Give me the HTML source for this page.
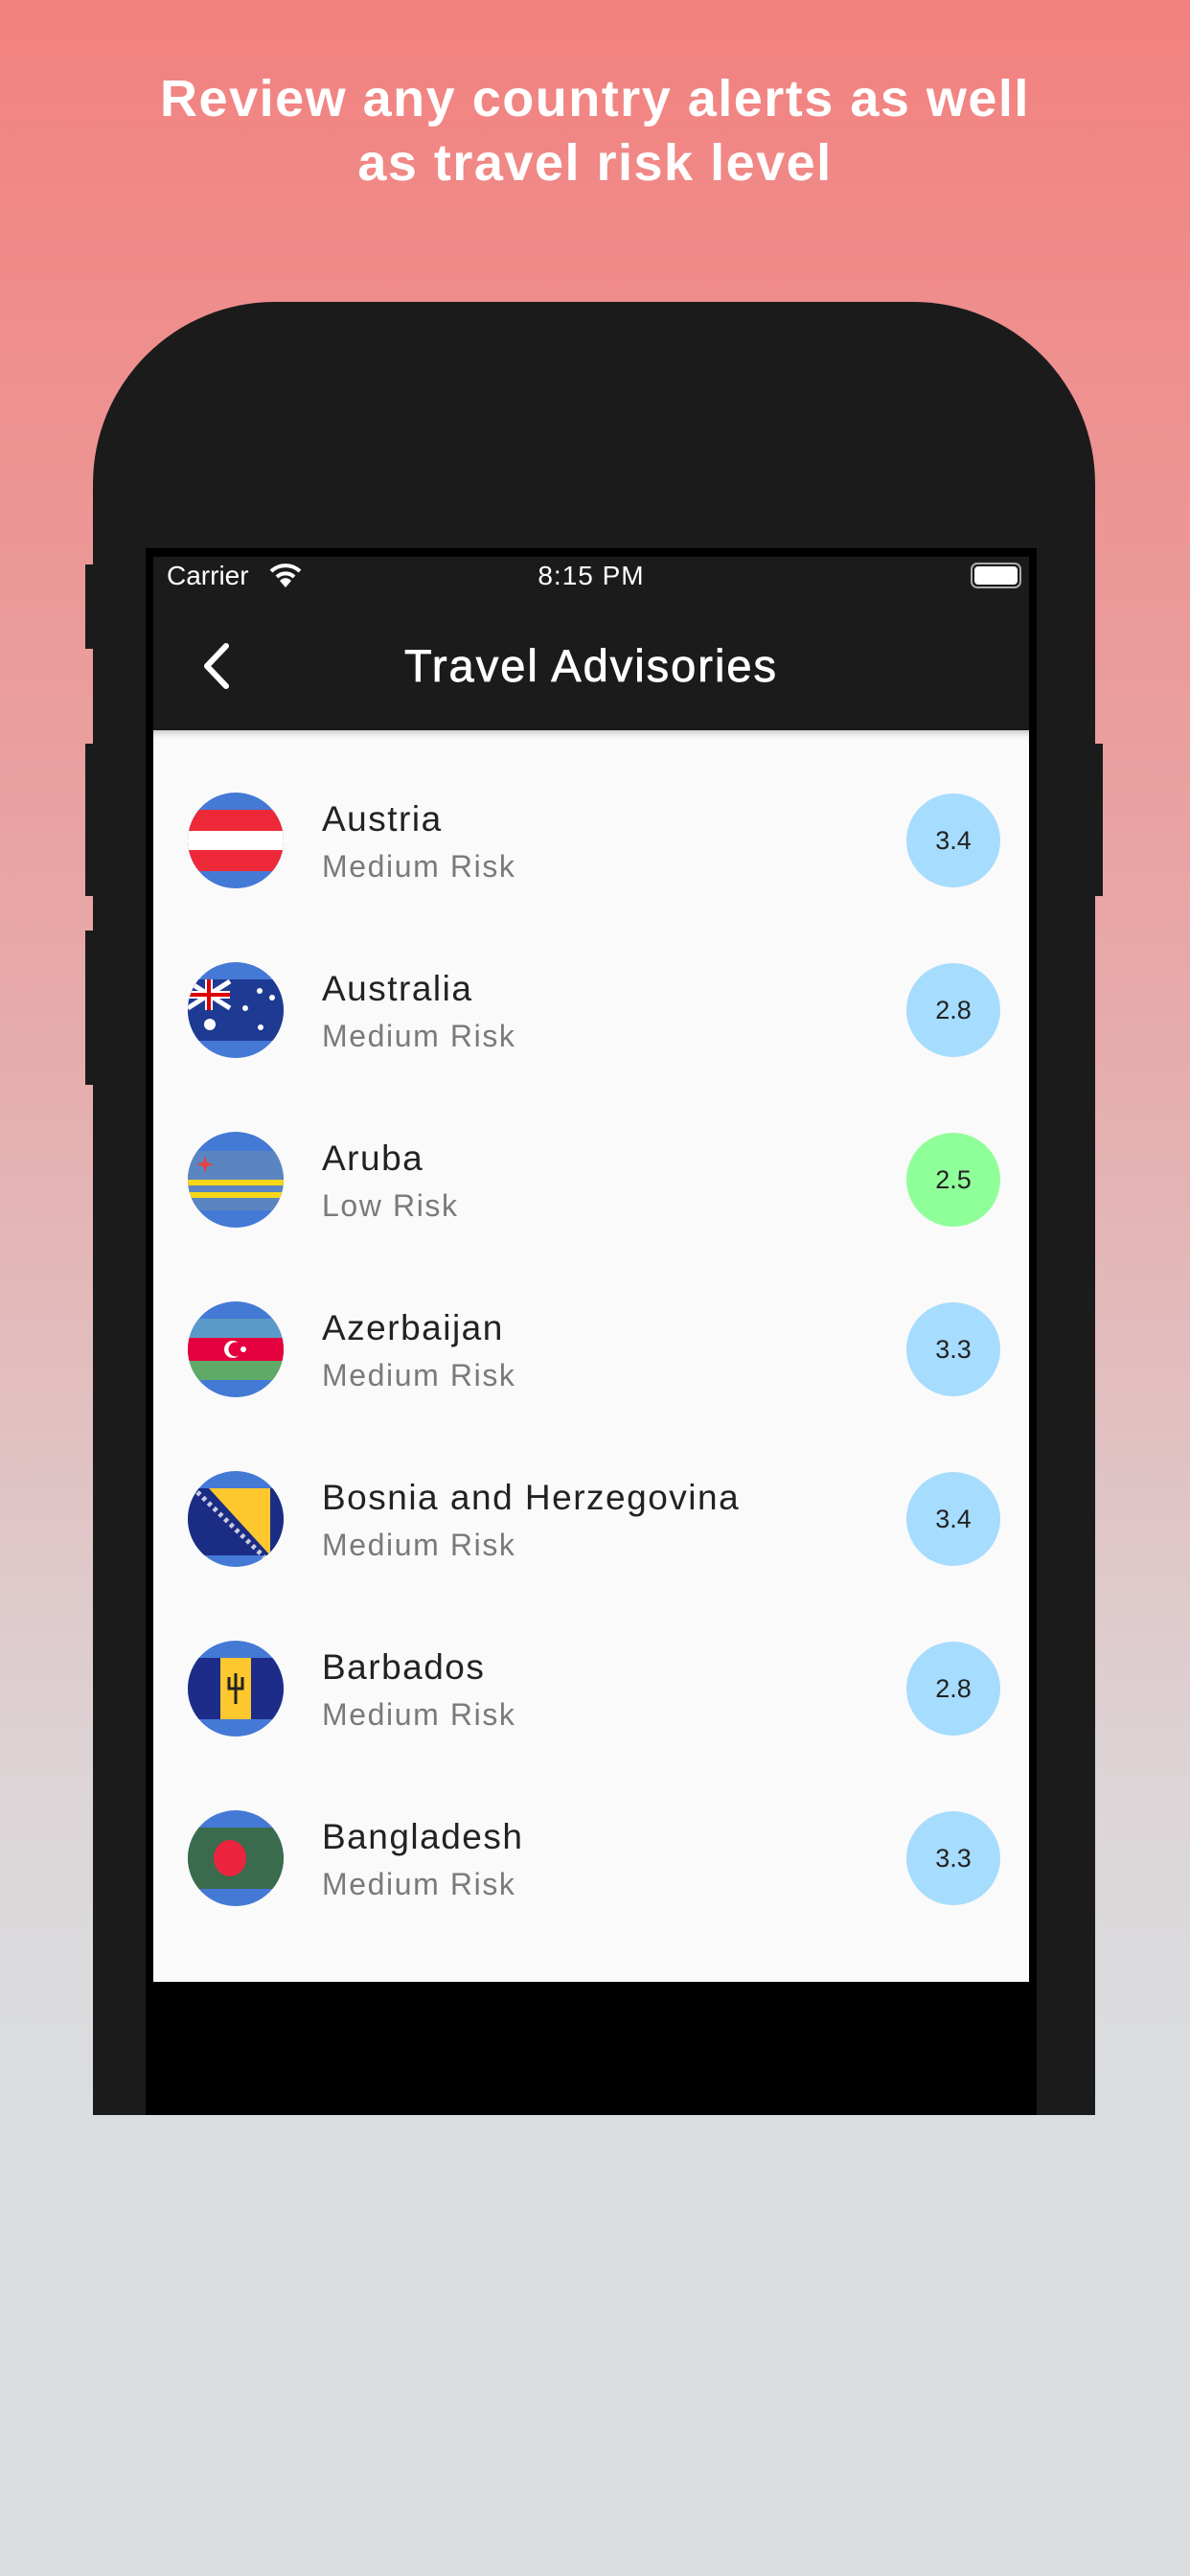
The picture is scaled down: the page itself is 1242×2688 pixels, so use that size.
<!DOCTYPE html>
<html><head><meta charset="utf-8"><style>
*{margin:0;padding:0;box-sizing:border-box}
html,body{width:1242px;height:2688px;overflow:hidden}
body{position:relative;font-family:"Liberation Sans",sans-serif;background:linear-gradient(#f2817f 0px,#e6acac 1100px,#dcd6d8 1900px,#dadee1 2210px,#dadee1 2688px)}
.head{position:absolute;top:70px;left:0;width:1242px;text-align:center;color:#fff;font-weight:bold;font-size:54px;line-height:67px;letter-spacing:1.5px}
.btn{position:absolute;background:#1b1b1b}
.phone{position:absolute;left:97px;top:315px;width:1046px;height:1892px;background:#1b1b1b;border-radius:190px 190px 0 0}
.screen{position:absolute;left:152px;top:572px;width:930px;height:1635px;background:#000}
.bar{position:absolute;left:160px;top:581px;width:914px;height:181px;background:#1b1b1b;color:#fff}
.list{position:absolute;left:160px;top:762px;width:914px;height:1306px;background:#fafafa;overflow:hidden;box-shadow:inset 0 8px 8px -6px rgba(0,0,0,.25)}
.row{position:absolute;left:0;width:914px;height:100px}
.flag{position:absolute;left:36px;top:0;width:100px;height:100px}
.name{position:absolute;left:176px;top:7px;font-size:37px;color:#222;letter-spacing:1.5px}
.risk{position:absolute;left:176px;top:59px;font-size:32px;color:#7a7a7a;letter-spacing:1.6px}
.badge{position:absolute;left:786px;top:1px;width:98px;height:98px;border-radius:50%;background:#a6dcfd;text-align:center;line-height:98px;font-size:27px;color:#222}
</style></head><body>
<div class="head">Review any country alerts as well<br>as travel risk level</div>
<div class="btn" style="left:89px;top:589px;width:10px;height:88px"></div>
<div class="btn" style="left:89px;top:776px;width:10px;height:159px"></div>
<div class="btn" style="left:89px;top:971px;width:10px;height:161px"></div>
<div class="btn" style="left:1141px;top:776px;width:10px;height:159px"></div>
<div class="phone"></div>
<div class="screen"></div>
<div class="bar">
 <div style="position:absolute;left:14px;top:4px;font-size:28px">Carrier</div>
 <svg style="position:absolute;left:120px;top:4px" width="36" height="30" viewBox="0 0 36 30"><path d="M3 11 A22 22 0 0 1 33 11" stroke="#fff" stroke-width="4" fill="none"/><path d="M9 17 A13 13 0 0 1 27 17" stroke="#fff" stroke-width="4" fill="none"/><path d="M18 28 L12 21 A8 8 0 0 1 24 21 Z" fill="#fff"/></svg>
 <div style="position:absolute;left:0;width:914px;top:4px;text-align:center;font-size:28px;letter-spacing:1px">8:15 PM</div>
 <div style="position:absolute;left:853px;top:6px;width:53px;height:27px;border:2px solid #aaa;border-radius:7px;padding:2px"><div style="width:100%;height:100%;background:#fff;border-radius:4px"></div></div>
 <svg style="position:absolute;left:48px;top:89px" width="36" height="50" viewBox="0 0 36 50"><path d="M28 4 L8 25 L28 46" stroke="#fff" stroke-width="6" fill="none" stroke-linecap="round" stroke-linejoin="round"/></svg>
 <div style="position:absolute;left:0;width:914px;top:86px;text-align:center;font-size:47px;letter-spacing:2px;-webkit-text-stroke:0.8px #fff">Travel Advisories</div>
</div>
<div class="list">
<div class="row" style="top:65px"><svg class="flag" viewBox="0 0 100 100"><clipPath id="c"><circle cx="50" cy="50" r="50"/></clipPath><g clip-path="url(#c)"><rect width="100" height="100" fill="#4479d6"/><rect y="18" width="100" height="64" fill="#ed2939"/><rect y="40" width="100" height="20" fill="#fff"/></g></svg><div class="name">Austria</div><div class="risk">Medium Risk</div><div class="badge">3.4</div></div>
<div class="row" style="top:242px"><svg class="flag" viewBox="0 0 100 100"><clipPath id="c2"><circle cx="50" cy="50" r="50"/></clipPath><g clip-path="url(#c2)"><rect width="100" height="100" fill="#4479d6"/><rect y="18" width="100" height="64" fill="#1f3a93"/><rect x="0" y="18" width="44" height="32" fill="#1f3a93"/><path d="M0 20 L44 48 M44 20 L0 48" stroke="#fff" stroke-width="5"/><rect x="0" y="30" width="44" height="8" fill="#fff"/><rect x="18" y="18" width="8" height="32" fill="#fff"/><rect x="0" y="32" width="44" height="4" fill="#d00"/><rect x="20" y="18" width="4" height="32" fill="#d00"/><circle cx="23" cy="65" r="6" fill="#fff"/><circle cx="75" cy="30" r="3" fill="#fff"/><circle cx="88" cy="37" r="3" fill="#fff"/><circle cx="60" cy="48" r="3" fill="#fff"/><circle cx="76" cy="68" r="3" fill="#fff"/></g></svg><div class="name">Australia</div><div class="risk">Medium Risk</div><div class="badge">2.8</div></div>
<div class="row" style="top:419px"><svg class="flag" viewBox="0 0 100 100"><clipPath id="c3"><circle cx="50" cy="50" r="50"/></clipPath><g clip-path="url(#c3)"><rect width="100" height="100" fill="#4479d6"/><rect y="20" width="100" height="62" fill="#5b85c0"/><rect y="50" width="100" height="6" fill="#f9d616"/><rect y="63" width="100" height="6" fill="#f9d616"/><path d="M18 25 L20 32 L27 34 L20 36 L18 43 L16 36 L9 34 L16 32Z" fill="#e8413c"/></g></svg><div class="name">Aruba</div><div class="risk">Low Risk</div><div class="badge" style="background:#8fff9a">2.5</div></div>
<div class="row" style="top:596px"><svg class="flag" viewBox="0 0 100 100"><clipPath id="c4"><circle cx="50" cy="50" r="50"/></clipPath><g clip-path="url(#c4)"><rect width="100" height="100" fill="#4479d6"/><rect y="18" width="100" height="20" fill="#5a9ac8"/><rect y="38" width="100" height="24" fill="#e4003e"/><rect y="62" width="100" height="20" fill="#5faa66"/><circle cx="47" cy="50" r="9" fill="#fff"/><circle cx="50" cy="50" r="7.5" fill="#e4003e"/><circle cx="58" cy="50" r="3" fill="#fff"/></g></svg><div class="name">Azerbaijan</div><div class="risk">Medium Risk</div><div class="badge">3.3</div></div>
<div class="row" style="top:773px"><svg class="flag" viewBox="0 0 100 100"><clipPath id="c5"><circle cx="50" cy="50" r="50"/></clipPath><g clip-path="url(#c5)"><rect width="100" height="100" fill="#4479d6"/><rect y="18" width="100" height="70" fill="#1a2c84"/><path d="M22 18 L86 18 L86 88Z" fill="#fec72e"/><path d="M10 22 L80 90" stroke="#ccd" stroke-width="5" stroke-dasharray="4 4"/></g></svg><div class="name">Bosnia and Herzegovina</div><div class="risk">Medium Risk</div><div class="badge">3.4</div></div>
<div class="row" style="top:950px"><svg class="flag" viewBox="0 0 100 100"><clipPath id="c6"><circle cx="50" cy="50" r="50"/></clipPath><g clip-path="url(#c6)"><rect width="100" height="100" fill="#4479d6"/><rect y="18" width="100" height="64" fill="#1d2c88"/><rect x="34" y="18" width="32" height="64" fill="#fec72e"/><path d="M43 38 L43 50 L57 50 L57 38 M50 34 L50 66" stroke="#222" stroke-width="3" fill="none"/></g></svg><div class="name">Barbados</div><div class="risk">Medium Risk</div><div class="badge">2.8</div></div>
<div class="row" style="top:1127px"><svg class="flag" viewBox="0 0 100 100"><clipPath id="c7"><circle cx="50" cy="50" r="50"/></clipPath><g clip-path="url(#c7)"><rect width="100" height="100" fill="#4479d6"/><rect y="18" width="100" height="64" fill="#3a6b4d"/><ellipse cx="44" cy="50" rx="17" ry="19" fill="#ec2440"/></g></svg><div class="name">Bangladesh</div><div class="risk">Medium Risk</div><div class="badge">3.3</div></div>
</div>
</body></html>
